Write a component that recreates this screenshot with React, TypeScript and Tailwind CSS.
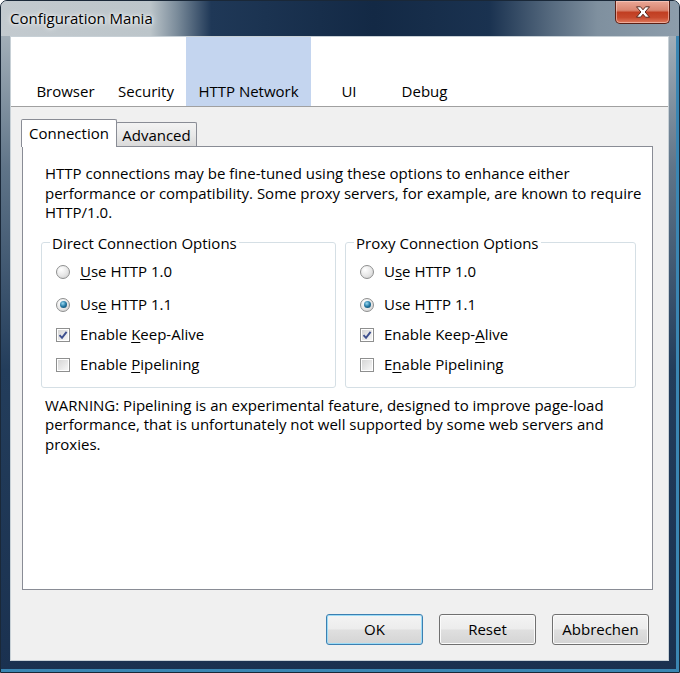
import type { ReactNode } from 'react'

function Radio({ checked }: { checked?: boolean }) {
  return (
    <span className="flex h-[14px] w-[14px] shrink-0 items-center justify-center rounded-full border border-[#8e8f8f] bg-[radial-gradient(circle_at_35%_30%,#ffffff_0%,#e6e6e6_55%,#c9c9c9_100%)]">
      {checked && (
        <span className="h-[7px] w-[7px] rounded-full bg-[radial-gradient(circle_at_40%_35%,#9adaf2_0%,#2478a3_50%,#0a3c5a_100%)]" />
      )}
    </span>
  )
}

function Check({ checked }: { checked?: boolean }) {
  return (
    <span className="flex h-[14px] w-[14px] shrink-0 border border-[#8e8f8f] bg-white p-[1px]">
      <span className="flex h-full w-full items-center justify-center bg-[linear-gradient(135deg,#d6d6d6_0%,#f6f6f6_100%)]">
        {checked && (
          <svg width="10" height="10" viewBox="0 0 10 10">
            <path d="M1.5 5.2 L4 7.8 L8.6 1.8" fill="none" stroke="#3d4f8e" strokeWidth="1.9" />
          </svg>
        )}
      </span>
    </span>
  )
}

function Row({ children, className = '' }: { children: ReactNode; className?: string }) {
  return <div className={`flex h-[30px] items-center gap-[10px] ${className}`}>{children}</div>
}

function U({ children }: { children: ReactNode }) {
  return <span className="underline decoration-1 underline-offset-[2px]">{children}</span>
}

function Button({ label, primary }: { label: string; primary?: boolean }) {
  return (
    <button
      className={`flex h-[31px] w-[97px] items-center justify-center rounded-[3px] border text-[15px] text-black bg-[linear-gradient(180deg,#f4f4f4_0%,#ececec_48%,#dfdfdf_52%,#d4d4d4_100%)] ${
        primary
          ? 'border-[#3c7fb1] shadow-[inset_0_0_0_1px_#9ddcf6]'
          : 'border-[#707070] shadow-[inset_0_0_0_1px_#fbfbfb]'
      }`}
    >
      {label}
    </button>
  )
}

const topTabs = [
  { label: 'Browser', w: 'w-[81px]' },
  { label: 'Security', w: 'w-[80px]' },
  { label: 'HTTP Network', w: 'w-[125px]', active: true },
  { label: 'UI', w: 'w-[76px]' },
  { label: 'Debug', w: 'w-[75px]' },
]

export default function App() {
  return (
    <div className="flex h-[673px] w-[680px] flex-col overflow-hidden rounded-t-[7px] border border-[#1a2838] bg-[linear-gradient(180deg,#b4bec5_0%,#5f7488_25%,#233d5b_55%,#1a3150_100%)] shadow-[inset_-3px_-3px_0_#3b86b2] font-['Open_Sans',sans-serif] text-black">
      {/* Title bar */}
      <div className="flex h-[35px] shrink-0 items-start justify-between bg-[linear-gradient(90deg,#c3cacf_0%,#bcc5ca_22%,#7a8b9a_26%,#1f3857_31%,#132945_55%,#1a3250_72%,#55697e_81%,#7f909f_88%,#8d9dab_100%)] pr-[9px]">
        <div className="flex h-[35px] items-center pl-[9px] text-[15px] text-black [text-shadow:0_0_6px_#fff,0_0_3px_#fff]">
          Configuration Mania
        </div>
        <div className="flex h-[23px] w-[55px] items-center justify-center rounded-b-[5px] border border-t-0 border-[#5a1f14] bg-[linear-gradient(180deg,#eaa897_0%,#d98570_42%,#c13e22_52%,#c7492d_75%,#df7b5e_100%)] shadow-[inset_0_0_0_1px_rgba(255,215,205,0.55)]">
          <svg width="16" height="12" viewBox="0 0 16 12">
            <path
              d="M1.5 0.8h4l2.5 3 2.5-3h4l-4.4 5.2 4.4 5.2h-4l-2.5-3-2.5 3h-4l4.4-5.2z"
              fill="#ffffff"
              stroke="#4a1a10"
              strokeWidth="0.9"
            />
          </svg>
        </div>
      </div>

      {/* Client area */}
      <div className="mb-[11px] ml-[9px] flex w-[659px] flex-1 flex-col border border-[#c7d0d6] bg-[#f0f0f0]">
        {/* Pref pane toolbar */}
        <div className="flex h-[70px] shrink-0 border-b border-[#a0a0a0] bg-white pl-[14px]">
          {topTabs.map((t) => (
            <div
              key={t.label}
              className={`flex h-full items-end justify-center pb-[5px] text-[15px] leading-[20px] ${t.w} ${
                t.active ? 'bg-[#c4d5ef]' : ''
              }`}
            >
              {t.label}
            </div>
          ))}
        </div>

        {/* Tab content */}
        <div className="flex flex-1 flex-col pl-[11px] pt-[12px]">
          <div className="-ml-[1px] flex items-end">
            <div className="relative z-10 -mb-[1px] flex h-[28px] w-[96px] items-center justify-center rounded-t-[2px] border border-b-0 border-[#898c95] bg-white text-[15px]">
              Connection
            </div>
            <div className="-ml-[1px] flex h-[24px] w-[81px] items-center justify-center rounded-t-[2px] border border-b-0 border-[#898c95] bg-[linear-gradient(180deg,#f3f3f3_0%,#e9e9e9_50%,#dadada_100%)] pt-[1px] text-[15px]">
              Advanced
            </div>
          </div>

          <div className="h-[444px] w-[631px] border border-[#898c95] bg-white pl-[18px] pt-[17px] text-[15px] leading-[19.5px]">
            <p className="pl-[4px]">
              <span className="block whitespace-nowrap">
                HTTP connections may be fine-tuned using these options to enhance either
              </span>
              <span className="block whitespace-nowrap">
                performance or compatibility. Some proxy servers, for example, are known to require
              </span>
              <span className="block whitespace-nowrap">HTTP/1.0.</span>
            </p>

            <div className="mt-[10px] flex gap-[9px]">
              <fieldset className="w-[295px] rounded-[3px] border border-[#d5dfe5] pb-[7px] pl-[14px]">
                <legend className="-ml-[6px] px-[2px] leading-[20px]">Direct Connection Options</legend>
                <Row className="mt-[4px]">
                  <Radio />
                  <span>
                    <U>U</U>se HTTP 1.0
                  </span>
                </Row>
                <Row className="mt-[3px]">
                  <Radio checked />
                  <span>
                    Us<U>e</U> HTTP 1.1
                  </span>
                </Row>
                <Row>
                  <Check checked />
                  <span>
                    Enable <U>K</U>eep-Alive
                  </span>
                </Row>
                <Row>
                  <Check />
                  <span>
                    Enable <U>P</U>ipelining
                  </span>
                </Row>
              </fieldset>

              <fieldset className="w-[291px] rounded-[3px] border border-[#d5dfe5] pb-[7px] pl-[14px]">
                <legend className="-ml-[6px] px-[2px] leading-[20px]">Proxy Connection Options</legend>
                <Row className="mt-[4px]">
                  <Radio />
                  <span>
                    U<U>s</U>e HTTP 1.0
                  </span>
                </Row>
                <Row className="mt-[3px]">
                  <Radio checked />
                  <span>
                    Use H<U>T</U>TP 1.1
                  </span>
                </Row>
                <Row>
                  <Check checked />
                  <span>
                    Enable Keep-<U>A</U>live
                  </span>
                </Row>
                <Row>
                  <Check />
                  <span>
                    E<U>n</U>able Pipelining
                  </span>
                </Row>
              </fieldset>
            </div>

            <p className="mt-[8px] pl-[4px]">
              <span className="block whitespace-nowrap">
                WARNING: Pipelining is an experimental feature, designed to improve page-load
              </span>
              <span className="block whitespace-nowrap">
                performance, that is unfortunately not well supported by some web servers and
              </span>
              <span className="block whitespace-nowrap">proxies.</span>
            </p>
          </div>

          <div className="mt-[24px] flex justify-end gap-[16px] pr-[19px]">
            <Button label="OK" primary />
            <Button label="Reset" />
            <Button label="Abbrechen" />
          </div>
        </div>
      </div>
    </div>
  )
}
